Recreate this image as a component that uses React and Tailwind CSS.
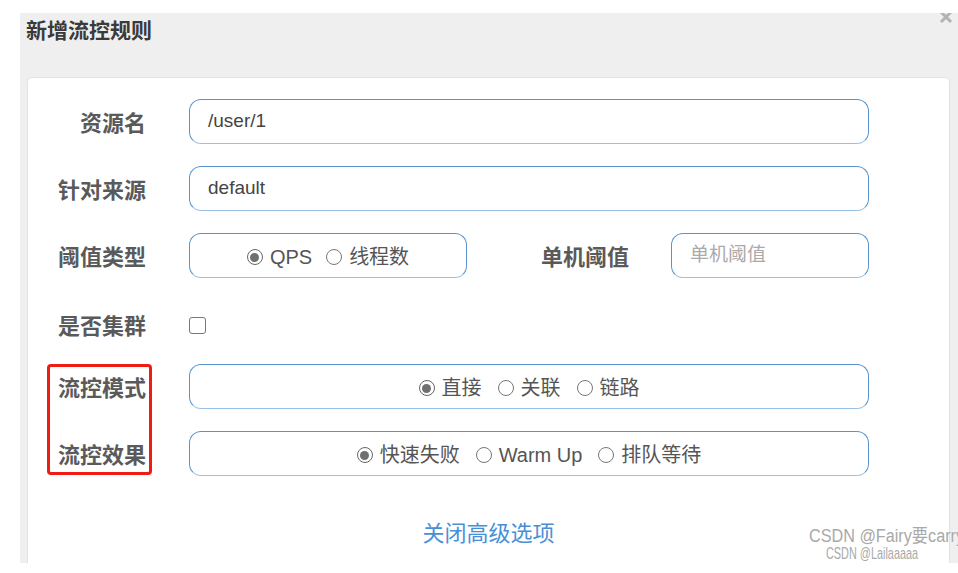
import React from 'react';

const FONT = { fontFamily: '"Liberation Sans", Arial, "Noto Sans CJK SC", sans-serif' };

function Radio({ checked, label }) {
  return (
    <label className="flex items-center gap-[7px] pt-[3px]">
      <span className={`flex h-[16px] w-[16px] items-center justify-center rounded-full border-[1.5px] ${checked ? 'border-[#666]' : 'border-[#777]'} bg-white`}>
        {checked && <span className="h-[9px] w-[9px] rounded-full bg-[#707070]" />}
      </span>
      <span className="text-[20px] leading-none text-[#555]">{label}</span>
    </label>
  );
}

function Label({ children }) {
  return (
    <div className="w-[88px] shrink-0 pt-[5px] text-right text-[22px] font-bold leading-none text-[#5a5a5a]">
      {children}
    </div>
  );
}

const boxCls = 'h-[45px] rounded-[12px] border border-[#5b93cf] border-b-[#9cc1e6] bg-white';

export default function App() {
  return (
    <div className="relative h-[573px] w-[958px] overflow-hidden bg-white" style={FONT}>
      <div className="pt-[13px] pl-[20px]">
        <div className="relative h-[550px] overflow-hidden bg-[#efefef]">
          {/* close */}
          <svg className="absolute right-[5px] top-[-3px]" width="14" height="14" viewBox="0 0 14 14">
            <path d="M2 2 L12 12 M12 2 L2 12" stroke="#b3b3b3" strokeWidth="3" />
          </svg>

          <div className="h-[64px] pl-[6px] pt-[7px]">
            <h2 className="text-[21px] font-bold leading-[22px] text-[#3a3a3a]">新增流控规则</h2>
          </div>

          <div className="relative ml-[7px] h-[500px] w-[923px] rounded-[5px] border border-[#e2e2e2] bg-white pl-[30px] pt-[21px]">
            {/* 资源名 */}
            <div className="flex items-center">
              <Label>资源名</Label>
              <div className={`${boxCls} ml-[43px] flex w-[680px] items-center px-[18px] text-[19px] text-[#444]`}>/user/1</div>
            </div>

            {/* 针对来源 */}
            <div className="mt-[22px] flex items-center">
              <Label>针对来源</Label>
              <div className={`${boxCls} ml-[43px] flex w-[680px] items-center px-[18px] text-[19px] text-[#444]`}>default</div>
            </div>

            {/* 阈值类型 / 单机阈值 */}
            <div className="mt-[22px] flex items-center">
              <Label>阈值类型</Label>
              <div className={`${boxCls} ml-[43px] flex w-[278px] items-center justify-center gap-[14px]`}>
                <Radio checked label="QPS" />
                <Radio label="线程数" />
              </div>
              <div className="ml-[74px]">
                <Label>单机阈值</Label>
              </div>
              <div className={`${boxCls} ml-[42px] flex w-[198px] items-center px-[18px] text-[19px] text-[#aaa]`}>单机阈值</div>
            </div>

            {/* 是否集群 */}
            <div className="mt-[24px] flex h-[45px] items-center">
              <Label>是否集群</Label>
              <span className="ml-[43px] mt-[1px] h-[17px] w-[17px] rounded-[3px] border-[1.5px] border-[#777] bg-white" />
            </div>

            {/* 流控模式 */}
            <div className="mt-[17px] flex items-center">
              <Label>流控模式</Label>
              <div className={`${boxCls} ml-[43px] flex w-[680px] items-center justify-center gap-[16px]`}>
                <Radio checked label="直接" />
                <Radio label="关联" />
                <Radio label="链路" />
              </div>
            </div>

            {/* 流控效果 */}
            <div className="mt-[22px] flex items-center">
              <Label>流控效果</Label>
              <div className={`${boxCls} ml-[43px] flex w-[680px] items-center justify-center gap-[16px]`}>
                <Radio checked label="快速失败" />
                <Radio label="Warm Up" />
                <Radio label="排队等待" />
              </div>
            </div>

            {/* annotation */}
            <div className="absolute left-[19px] top-[286px] h-[111px] w-[105px] rounded-[4px] border-[3px] border-[#f01c14]" />

            <div className="mt-[43px] flex justify-center pr-[30px]">
              <a className="text-[22px] leading-[30px] text-[#4a8fd6]">关闭高级选项</a>
            </div>
          </div>
        </div>
      </div>

      {/* watermark */}
      <div className="absolute left-[809px] top-[526px] origin-left scale-x-[0.9] whitespace-nowrap text-[18px] leading-[20px] text-[#a9a9a9] [text-shadow:0_0_2px_#fff]">
        CSDN @Fairy要carry
      </div>
      <div className="absolute left-[826px] top-[546px] origin-left scale-x-[0.64] whitespace-nowrap text-[17px] leading-[16px] text-[#a9a9a9] [text-shadow:0_0_2px_#fff]">
        CSDN @Lailaaaaa
      </div>
    </div>
  );
}
